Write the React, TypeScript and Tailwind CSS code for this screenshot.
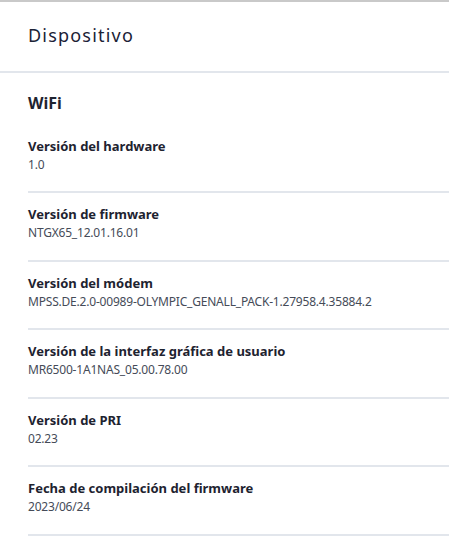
import React from 'react';

const rows = [
  { label: 'Versión del hardware', value: '1.0' },
  { label: 'Versión de firmware', value: 'NTGX65_12.01.16.01' },
  { label: 'Versión del módem', value: 'MPSS.DE.2.0-00989-OLYMPIC_GENALL_PACK-1.27958.4.35884.2' },
  { label: 'Versión de la interfaz gráfica de usuario', value: 'MR6500-1A1NAS_05.00.78.00' },
  { label: 'Versión de PRI', value: '02.23' },
  { label: 'Fecha de compilación del firmware', value: '2023/06/24' },
];

export default function App() {
  return (
    <div className="w-[449px] h-[556px] bg-white border-t-2 border-[#c9c9c9] font-['Noto_Sans',sans-serif] overflow-hidden">
      <div className="h-[71px] flex items-center pl-[28px] pb-[3px] border-b-2 border-[#e2e6ec]">
        <h1 className="text-[18px] leading-[28px] tracking-[1.2px] text-[#1b2236]">Dispositivo</h1>
      </div>
      <div className="pl-[28px] pt-[18px]">
        <h2 className="text-[16px] leading-[24px] font-bold text-[#1e2330] mb-[9.5px]">WiFi</h2>
        {rows.map((r) => (
          <div key={r.label} className="pt-[12px] pb-[17.5px] border-b-2 border-[#e2e6ec]">
            <div className="text-[13px] leading-[18px] font-bold text-[#1e2330]">{r.label}</div>
            <div className="mt-[1px] text-[12px] leading-[18px] tracking-[-0.2px] text-[#454b58]">{r.value}</div>
          </div>
        ))}
      </div>
    </div>
  );
}
